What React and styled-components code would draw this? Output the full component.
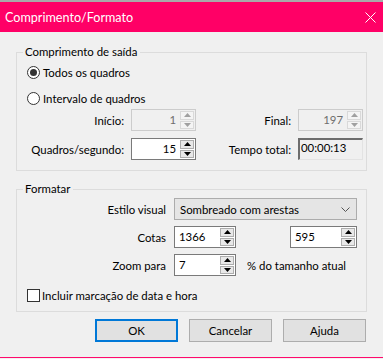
import styled, { createGlobalStyle } from "styled-components";

const GlobalStyle = createGlobalStyle`
  html, body { margin: 0; padding: 0; background: #f0f0f0; }
  body { font-family: Lato, "Noto Sans", sans-serif; font-size: 11.4px; color: #000; }
  * { box-sizing: border-box; }
`;

const Screen = styled.div`
  width: 383px;
  height: 359px;
  display: flex;
  flex-direction: column;
  overflow: hidden;
`;

const BehindStrip = styled.div`
  height: 2px;
  background: #a9a9a9;
`;

const Window = styled.div`
  height: 356px;
  display: flex;
  flex-direction: column;
  border-bottom: 1px solid #ff0a6c;
  background: #f0f0f0;
`;

const TitleBar = styled.div`
  height: 30px;
  background: #ff0066;
  color: #fff;
  display: flex;
  align-items: center;
  justify-content: space-between;
  padding: 0 7px 0 5px;
  font-size: 12.6px;
`;

const CloseIcon = () => (
  <svg width="11" height="11" viewBox="0 0 11 11">
    <path d="M0.5 0.5 L10.5 10.5 M10.5 0.5 L0.5 10.5" stroke="#fff" strokeWidth="1" />
  </svg>
);

const Body = styled.div`
  flex: 1;
  display: flex;
  flex-direction: column;
  padding: 12px 16px 0 16px;
`;

const Group = styled.fieldset`
  margin: ${p => p.$top}px 0 0 0;
  padding: 0 8px ${p => p.$bottom}px 10px;
  border: 1px solid #dcdcdc;
  min-width: 0;
`;

const Legend = styled.legend`
  margin-left: -4px;
  padding: 0 3px 0 2px;
  line-height: 16px;
`;

const RadioRow = styled.label`
  display: flex;
  align-items: center;
  gap: 3px;
  height: 20px;
  margin-top: ${p => p.$top}px;
`;

const RadioDot = styled.span`
  width: 13px;
  height: 13px;
  border-radius: 50%;
  border: 1px solid #333;
  background: #fff;
  display: flex;
  align-items: center;
  justify-content: center;
  &::after {
    content: "";
    width: 7px;
    height: 7px;
    border-radius: 50%;
    background: ${p => (p.$checked ? "#333" : "transparent")};
  }
`;

const RangeGrid = styled.div`
  display: grid;
  grid-template-columns: 97px 65px 88px 65px;
  column-gap: 7px;
  row-gap: 7px;
  margin-top: 1px;
  align-items: center;
`;

const FormGrid = styled.div`
  display: grid;
  grid-template-columns: 139px 62px 38px 67px;
  column-gap: 8px;
  row-gap: 6px;
  margin-top: 1px;
  align-items: center;
`;

const Label = styled.span`
  text-align: right;
  color: #000;
  white-space: nowrap;
`;

const SpinBox = styled.div`
  display: flex;
  height: 22px;
  border: 1px solid ${p => (p.$disabled ? "#cccccc" : "#7a7a7a")};
  background: ${p => (p.$disabled ? "#f0f0f0" : "#fff")};
  grid-column: ${p => p.$col || "auto"};
`;

const SpinValue = styled.span`
  flex: 1;
  padding: 2px 4px 0 4px;
  text-align: ${p => p.$align};
  color: ${p => (p.$disabled ? "#6d6d6d" : "#000")};
  line-height: 16px;
`;

const Spinner = styled.div`
  width: 15px;
  display: flex;
  flex-direction: column;
  gap: 1px;
  padding: 1px 1px 1px 0;
`;

const SpinButton = styled.div`
  flex: 1;
  display: flex;
  align-items: center;
  justify-content: center;
  background: ${p => (p.$disabled ? "#f4f4f4" : "#e8e8e8")};
  border: 1px solid ${p => (p.$disabled ? "#d9d9d9" : "#adadad")};
`;

const Arrow = ({ up, disabled }) => (
  <svg width="7" height="4" viewBox="0 0 7 4">
    <path d={up ? "M0 4 L3.5 0 L7 4 Z" : "M0 0 L3.5 4 L7 0 Z"} fill={disabled ? "#a0a0a0" : "#000"} />
  </svg>
);

const Spin = ({ value, align = "right", disabled, col }) => (
  <SpinBox $disabled={disabled} $col={col}>
    <SpinValue $align={align} $disabled={disabled}>{value}</SpinValue>
    <Spinner>
      <SpinButton $disabled={disabled}><Arrow up disabled={disabled} /></SpinButton>
      <SpinButton $disabled={disabled}><Arrow disabled={disabled} /></SpinButton>
    </Spinner>
  </SpinBox>
);

const ReadOnlyField = styled.div`
  height: 22px;
  border-style: solid;
  border-width: 2px 1px 1px 2px;
  border-color: #6d6d6d #e3e3e3 #e3e3e3 #6d6d6d;
  padding: 0 1px;
  line-height: 16px;
  color: #000;
`;

const Select = styled.div`
  grid-column: 2 / 5;
  height: 22px;
  border: 1px solid #acacac;
  background: #e5e5e5;
  display: flex;
  align-items: center;
  justify-content: space-between;
  padding: 0 6px 0 5px;
`;

const Chevron = () => (
  <svg width="9" height="5" viewBox="0 0 9 5">
    <path d="M0.5 0.5 L4.5 4.5 L8.5 0.5" stroke="#555" fill="none" strokeWidth="1" />
  </svg>
);

const Suffix = styled.span`
  grid-column: 3 / 5;
  padding-left: 3px;
  white-space: nowrap;
`;

const CheckRow = styled.label`
  display: flex;
  align-items: center;
  gap: 2px;
  margin-top: 12px;
  height: 14px;
`;

const CheckBox = styled.span`
  width: 13px;
  height: 13px;
  border: 1px solid #333;
  background: #fff;
`;

const ButtonRow = styled.div`
  display: flex;
  justify-content: flex-end;
  gap: 11px;
  padding-right: 1px;
  margin-top: 7px;
`;

const Button = styled.div`
  width: 83px;
  height: 23px;
  display: flex;
  align-items: center;
  justify-content: center;
  background: #e1e1e1;
  border: ${p => (p.$default ? "2px solid #0078d7" : "1px solid #adadad")};
`;

export default function App() {
  return (
    <>
      <GlobalStyle />
      <Screen>
        <BehindStrip />
        <Window>
          <TitleBar>
            <span>Comprimento/Formato</span>
            <CloseIcon />
          </TitleBar>
          <Body>
            <Group $top={0} $bottom={10}>
              <Legend>Comprimento de saída</Legend>
              <RadioRow $top={2}>
                <RadioDot $checked />
                Todos os quadros
              </RadioRow>
              <RadioRow $top={6}>
                <RadioDot />
                Intervalo de quadros
              </RadioRow>
              <RangeGrid>
                <Label>Início:</Label>
                <Spin value="1" disabled />
                <Label>Final:</Label>
                <Spin value="197" disabled />
                <Label>Quadros/segundo:</Label>
                <Spin value="15" />
                <Label>Tempo total:</Label>
                <ReadOnlyField>00:00:13</ReadOnlyField>
              </RangeGrid>
            </Group>
            <Group $top={10} $bottom={9}>
              <Legend>Formatar</Legend>
              <FormGrid>
                <Label>Estilo visual</Label>
                <Select>
                  <span>Sombreado com arestas</span>
                  <Chevron />
                </Select>
                <Label>Cotas</Label>
                <Spin value="1366" align="left" />
                <Spin value="595" align="left" col="4" />
                <Label>Zoom para</Label>
                <Spin value="7" align="left" />
                <Suffix>% do tamanho atual</Suffix>
              </FormGrid>
              <CheckRow>
                <CheckBox />
                Incluir marcação de data e hora
              </CheckRow>
            </Group>
            <ButtonRow>
              <Button $default>OK</Button>
              <Button>Cancelar</Button>
              <Button>Ajuda</Button>
            </ButtonRow>
          </Body>
        </Window>
      </Screen>
    </>
  );
}
